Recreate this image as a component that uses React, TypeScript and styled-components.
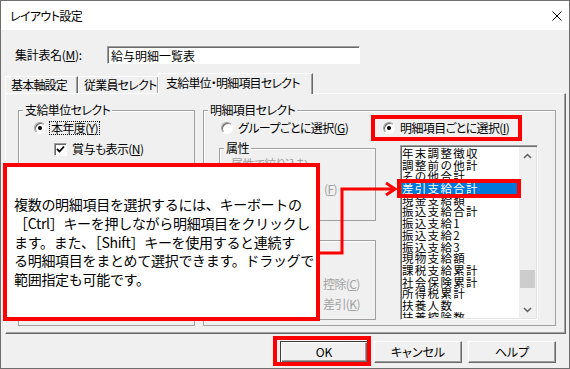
import React from "react";
import styled, { createGlobalStyle } from "styled-components";

const GlobalStyle = createGlobalStyle`
  html, body {
    margin: 0;
    padding: 0;
    background: #f0f0f0;
  }
  body {
    font-family: "Noto Sans CJK JP", "Noto Sans", sans-serif;
    font-size: 12px;
    color: #000;
  }
  * {
    box-sizing: border-box;
  }
`;

const Window = styled.div`
  position: relative;
  width: 570px;
  height: 369px;
  border: 1px solid #6e6e6e;
  background: #f0f0f0;
  display: flex;
  flex-direction: column;
  overflow: hidden;
  font-feature-settings: "palt";
  letter-spacing: -0.6px;
`;

const TitleBar = styled.div`
  height: 29px;
  flex-shrink: 0;
  background: #fff;
  display: flex;
  align-items: center;
  justify-content: space-between;
  padding: 0 7px 0 9px;
  font-size: 12px;
  line-height: 14px;
`;

const NameRow = styled.div`
  display: flex;
  align-items: center;
  margin-top: 16px;
  padding-left: 14px;
  height: 18px;
`;

const FieldLabel = styled.span`
  width: 92px;
  line-height: 18px;
  letter-spacing: -0.3px;
`;

const NameInput = styled.input`
  width: 253px;
  height: 18px;
  padding: 0 3px;
  font: inherit;
  font-size: 12px;
  line-height: 16px;
  letter-spacing: 0;
  background: #fff;
  border: 1px solid;
  border-color: #a0a0a0 #fff #fff #a0a0a0;
  box-shadow: inset 1px 1px 0 #696969;
  outline: none;
`;

const TabStrip = styled.div`
  display: flex;
  align-items: flex-end;
  height: 20px;
  margin-top: 9px;
  padding-left: 4px;
  position: relative;
  z-index: 1;
`;

const Tab = styled.div<{ $active?: boolean; $width: number }>`
  width: ${(p) => p.$width}px;
  height: ${(p) => (p.$active ? 21 : 17)}px;
  margin-bottom: ${(p) => (p.$active ? -1 : 0)}px;
  margin-left: ${(p) => (p.$active ? -1 : 0)}px;
  padding-left: ${(p) => (p.$active ? 7 : 5)}px;
  padding-top: ${(p) => (p.$active ? 2 : 1)}px;
  background: #f0f0f0;
  border-top: 1px solid #fff;
  border-left: 1px solid #fff;
  border-right: 1px solid #696969;
  box-shadow: inset -1px 0 0 #a0a0a0;
  line-height: 14px;
  letter-spacing: -0.8px;
  white-space: nowrap;
`;

const Panel = styled.div`
  height: 241px;
  margin: 0 3px 0 4px;
  border: 1px solid;
  border-color: #fff #696969 #696969 #fff;
  box-shadow: inset -1px -1px 0 #a0a0a0;
  display: flex;
  gap: 8px;
  padding: 9px 9px 7px 12px;
`;

const Group = styled.fieldset<{ $width?: number; $height?: number }>`
  margin: 0;
  padding: 0;
  min-width: 0;
  border: 1px solid #a0a0a0;
  box-shadow: inset 1px 1px 0 #fff;
  ${(p) => (p.$width ? `width: ${p.$width}px;` : "flex: 1;")}
  ${(p) => (p.$height ? `height: ${p.$height}px;` : "")}
`;

const Legend = styled.legend`
  margin-left: 4px;
  padding: 0 2px;
  font-size: 12px;
  line-height: 14px;
  background: #f0f0f0;
`;

const LeftBody = styled.div`
  padding: 4px 0 0 15px;
  display: flex;
  flex-direction: column;
  gap: 7px;
`;

const OptionRow = styled.div<{ $indent?: number }>`
  display: flex;
  align-items: center;
  height: 14px;
  padding-left: ${(p) => p.$indent ?? 0}px;
  white-space: nowrap;
`;

const RadioCircle = styled.span<{ $checked?: boolean }>`
  width: 12px;
  height: 12px;
  flex-shrink: 0;
  border-radius: 50%;
  border: 1px solid;
  border-color: #a0a0a0 #fff #fff #a0a0a0;
  box-shadow: inset 1px 1px 0 #696969;
  background: #fff;
  display: grid;
  place-items: center;
  margin-right: 3px;
  &::after {
    content: "";
    width: 4px;
    height: 4px;
    border-radius: 50%;
    background: #000;
    display: ${(p) => (p.$checked ? "block" : "none")};
  }
`;

const CheckSquare = styled.span`
  width: 13px;
  height: 13px;
  flex-shrink: 0;
  border: 1px solid;
  border-color: #a0a0a0 #fff #fff #a0a0a0;
  box-shadow: inset 1px 1px 0 #696969;
  background: #fff;
  display: grid;
  place-items: center;
  margin-right: 3px;
`;

const OptionText = styled.span<{ $focused?: boolean }>`
  line-height: 12px;
  padding: 0 1px;
  border: 1px ${(p) => (p.$focused ? "dotted #000" : "solid transparent")};
`;

const RightBody = styled.div`
  padding: 4px 0 0 15px;
`;

const RadioLine = styled.div`
  display: grid;
  grid-template-columns: 162px auto;
  padding-left: 2px;
  height: 14px;
  align-items: center;
`;

const DetailGrid = styled.div`
  display: grid;
  grid-template-columns: 157px 138px;
  column-gap: 24px;
  margin-top: 6px;
`;

const SubColumn = styled.div`
  display: flex;
  flex-direction: column;
  gap: 19px;
`;

const DisabledLabel = styled.div<{ $align?: string }>`
  color: #a0a0a0;
  line-height: 14px;
  height: 14px;
  white-space: nowrap;
  text-align: ${(p) => p.$align ?? "left"};
`;

const LabelGap = styled.span`
  margin-right: 4px;
`;

const AttrBody = styled.div`
  padding: 2px 38px 0 11px;
  display: flex;
  flex-direction: column;
  gap: 11px;
`;

const KindGrid = styled.div`
  display: grid;
  grid-template-columns: 1fr 52px;
  row-gap: 6px;
  padding: 36px 0 0 11px;
`;

const ListBox = styled.div`
  height: 175px;
  margin-top: 4px;
  background: #fff;
  border: 1px solid;
  border-color: #a0a0a0 #fff #fff #a0a0a0;
  box-shadow: inset 1px 1px 0 #696969, inset -1px -1px 0 #e3e3e3;
  padding: 1px;
  display: flex;
  font-feature-settings: "palt" 0;
  letter-spacing: 0;
`;

const ListItems = styled.div`
  flex: 1;
  overflow: hidden;
  padding-top: 1px;
`;

const ListItem = styled.div<{ $selected?: boolean }>`
  font-size: 11.5px;
  letter-spacing: 1.3px;
  line-height: 11.7px;
  height: 11.7px;
  white-space: nowrap;
  background: ${(p) => (p.$selected ? "#0078d7" : "transparent")};
  color: ${(p) => (p.$selected ? "#fff" : "#000")};
`;

const ScrollBar = styled.div`
  width: 17px;
  flex-shrink: 0;
  background: #f0f0f0;
  display: flex;
  flex-direction: column;
`;

const ScrollButton = styled.div`
  height: 17px;
  display: grid;
  place-items: center;
`;

const ScrollTrack = styled.div`
  flex: 1;
`;

const Thumb = styled.div<{ $offset: number }>`
  margin: ${(p) => p.$offset}px 1px 0;
  height: 18px;
  background: #cdcdcd;
`;

const ButtonRow = styled.div`
  display: flex;
  justify-content: flex-end;
  gap: 6px;
  margin-top: 7px;
  padding-right: 13px;
`;

const DialogButton = styled.button<{ $default?: boolean }>`
  width: 88px;
  height: 22px;
  font: inherit;
  font-size: 12px;
  line-height: 14px;
  padding: 0;
  background: #f0f0f0;
  color: #000;
  border: 1px solid ${(p) => (p.$default ? "#3c3c3c" : "#fff")};
  ${(p) =>
    p.$default
      ? "box-shadow: inset 1px 1px 0 #fff, inset -1px -1px 0 #696969, inset -2px -2px 0 #a0a0a0;"
      : "border-color: #fff #696969 #696969 #fff; box-shadow: inset -1px -1px 0 #a0a0a0;"}
`;

const RedFrame = styled.div<{ $x: number; $y: number; $w: number; $h: number }>`
  position: absolute;
  left: ${(p) => p.$x - 1}px;
  top: ${(p) => p.$y - 1}px;
  width: ${(p) => p.$w}px;
  height: ${(p) => p.$h}px;
  border: 4px solid #ff0000;
  pointer-events: none;
`;

const Callout = styled.div`
  position: absolute;
  left: 2px;
  top: 162px;
  width: 317px;
  height: 158px;
  border: 4px solid #ff0000;
  background: #fff;
  display: flex;
  align-items: center;
  padding-left: 7px;
  font-size: 14px;
  line-height: 18.7px;
  letter-spacing: -0.3px;
  white-space: nowrap;
  font-feature-settings: "palt" 0;
  z-index: 2;
`;

const ArrowLayer = styled.svg`
  position: absolute;
  left: 0;
  top: 0;
  pointer-events: none;
  z-index: 2;
`;

const Key = ({ k }: { k: string }) => (
  <>
    (<u>{k}</u>)
  </>
);

const items = [
  "年末調整徴収",
  "調整前の他計",
  "その他合計",
  "差引支給合計",
  "現金支給額",
  "振込支給合計",
  "振込支給1",
  "振込支給2",
  "振込支給3",
  "現物支給額",
  "課税支給累計",
  "社会保険累計",
  "所得税累計",
  "扶養人数",
  "扶養控除数",
];

function App() {
  return (
    <>
      <GlobalStyle />
      <Window>
        <TitleBar>
          <span>レイアウト設定</span>
          <svg width="10" height="10" viewBox="0 0 10 10">
            <path d="M0.5 0.5 L9.5 9.5 M9.5 0.5 L0.5 9.5" stroke="#000" strokeWidth="1" />
          </svg>
        </TitleBar>

        <NameRow>
          <FieldLabel>
            集計表名<Key k="M" />:
          </FieldLabel>
          <NameInput readOnly value="給与明細一覧表" />
        </NameRow>

        <TabStrip>
          <Tab $width={73}>基本軸設定</Tab>
          <Tab $width={81}>従業員セレクト</Tab>
          <Tab $width={155} $active>
            支給単位・明細項目セレクト
          </Tab>
        </TabStrip>

        <Panel>
          <Group $width={177}>
            <Legend>支給単位セレクト</Legend>
            <LeftBody>
              <OptionRow>
                <RadioCircle $checked />
                <OptionText $focused>
                  本年度<Key k="Y" />
                </OptionText>
              </OptionRow>
              <OptionRow $indent={20}>
                <CheckSquare>
                  <svg width="9" height="9" viewBox="0 0 9 9">
                    <path d="M1 4 L3.5 6.5 L8 1.5" stroke="#000" strokeWidth="1.8" fill="none" />
                  </svg>
                </CheckSquare>
                <OptionText>
                  賞与も表示<Key k="N" />
                </OptionText>
              </OptionRow>
            </LeftBody>
          </Group>

          <Group>
            <Legend>明細項目セレクト</Legend>
            <RightBody>
              <RadioLine>
                <OptionRow>
                  <RadioCircle />
                  <OptionText>
                    グループごとに選択<Key k="G" />
                  </OptionText>
                </OptionRow>
                <OptionRow>
                  <RadioCircle $checked />
                  <OptionText>
                    明細項目ごとに選択<Key k="I" />
                  </OptionText>
                </OptionRow>
              </RadioLine>

              <DetailGrid>
                <SubColumn>
                  <Group $height={82}>
                    <Legend>属性</Legend>
                    <AttrBody>
                      <DisabledLabel>属性で絞り込む</DisabledLabel>
                      <DisabledLabel $align="right">
                        <LabelGap>属性を選択</LabelGap>
                        <Key k="F" />
                      </DisabledLabel>
                    </AttrBody>
                  </Group>
                  <Group $height={75}>
                    <KindGrid>
                      <DisabledLabel>
                        支給<Key k="S" />
                      </DisabledLabel>
                      <DisabledLabel>
                        控除<Key k="C" />
                      </DisabledLabel>
                      <DisabledLabel>
                        その他<Key k="O" />
                      </DisabledLabel>
                      <DisabledLabel>
                        差引<Key k="K" />
                      </DisabledLabel>
                    </KindGrid>
                  </Group>
                </SubColumn>

                <ListBox>
                  <ListItems>
                    {items.map((it, i) => (
                      <ListItem key={it} $selected={i === 3}>
                        {it}
                      </ListItem>
                    ))}
                  </ListItems>
                  <ScrollBar>
                    <ScrollButton>
                      <svg width="9" height="6" viewBox="0 0 9 6">
                        <path d="M1 5 L4.5 1.5 L8 5" stroke="#606060" strokeWidth="1.5" fill="none" />
                      </svg>
                    </ScrollButton>
                    <ScrollTrack>
                      <Thumb $offset={106} />
                    </ScrollTrack>
                    <ScrollButton>
                      <svg width="9" height="6" viewBox="0 0 9 6">
                        <path d="M1 1 L4.5 4.5 L8 1" stroke="#606060" strokeWidth="1.5" fill="none" />
                      </svg>
                    </ScrollButton>
                  </ScrollBar>
                </ListBox>
              </DetailGrid>
            </RightBody>
          </Group>
        </Panel>

        <ButtonRow>
          <DialogButton $default>OK</DialogButton>
          <DialogButton>キャンセル</DialogButton>
          <DialogButton>ヘルプ</DialogButton>
        </ButtonRow>

        <Callout>
          <div>
            複数の明細項目を選択するには、キーボートの
            <br />
            ［Ctrl］キーを押しながら明細項目をクリックし
            <br />
            ます。また、［Shift］キーを使用すると連続す
            <br />
            る明細項目をまとめて選択できます。ドラッグで
            <br />
            範囲指定も可能です。
          </div>
        </Callout>

        <RedFrame $x={371} $y={115} $w={151} $h={26} />
        <RedFrame $x={397} $y={179} $w={124} $h={19} />
        <RedFrame $x={273} $y={336} $w={98} $h={30} />

        <ArrowLayer width="568" height="367" viewBox="0 0 568 367">
          <polyline
            points="319,252 341,252 341,188 393,188"
            fill="none"
            stroke="#ff0000"
            strokeWidth="3"
          />
          <polyline
            points="385,182 394,188 385,194"
            fill="none"
            stroke="#ff0000"
            strokeWidth="3"
          />
        </ArrowLayer>
      </Window>
    </>
  );
}

export default App;
